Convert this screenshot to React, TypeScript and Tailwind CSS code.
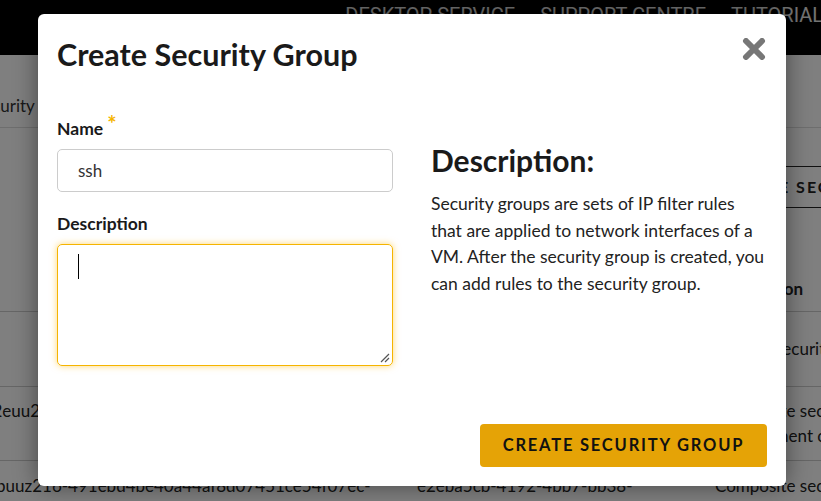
import React from "react";

export default function App() {
  return (
    <div className="relative w-[821px] h-[501px] overflow-hidden bg-white font-['Lato',sans-serif] text-[#222]">
      {/* Underlying page */}
      <header className="h-[55px] bg-black flex justify-end items-start gap-[25px] pt-[3px] font-['Roboto',sans-serif] text-[20px] leading-[24px] text-white/90 uppercase whitespace-nowrap">
        <span className="ml-auto">Desktop Service</span>
        <span>Support Centre</span>
        <span className="mr-[-14px]">Tutorials</span>
      </header>
      <div className="h-[73px] border-b border-[#ddd] flex items-end pb-[9px]">
        <span className="ml-[-26px] text-[17px] text-[#333] whitespace-nowrap">Security Groups</span>
      </div>
      <div className="flex justify-end pt-[38px]">
        <div className="h-[42px] mr-[-163px] px-[24px] border border-[#222] flex items-center text-[16px] font-bold tracking-[2px] text-[#222] whitespace-nowrap">
          CREATE SECURITY GROUP
        </div>
      </div>
      <div className="mt-[56px] h-[48px] border-b border-[#ccc] flex items-center">
        <div className="w-[715px] shrink-0" />
        <span className="font-bold text-[17px] pt-[2px]">Description</span>
      </div>
      <div className="h-[75px] border-b border-[#ccc] flex items-center text-[17px]">
        <div className="w-[715px] shrink-0" />
        <span className="whitespace-nowrap">Default security group</span>
      </div>
      <div className="h-[74px] border-b border-[#ccc] flex items-start pt-[11px] text-[17px] leading-[25px]">
        <div className="w-[417px] shrink-0 overflow-hidden whitespace-nowrap">
          <span className="ml-[-30px]">sg-2euu2</span>
        </div>
        <div className="w-[298px] shrink-0" />
        <span className="whitespace-nowrap">Composite security group for<br />Management console</span>
      </div>
      <div className="flex items-start pt-[12px] text-[17px] leading-[25px] whitespace-nowrap">
        <div className="w-[417px] shrink-0 overflow-hidden">
          <span className="ml-[-4px]">buuz216-491ebd4be40a44af8d07451ce54f07ec-</span>
        </div>
        <div className="w-[298px] shrink-0">e2eba5cb-4192-4bb7-bb38-</div>
        <span>Composite security</span>
      </div>

      {/* Overlay */}
      <div className="absolute inset-0 bg-black/50" />

      {/* Modal */}
      <div className="absolute left-[38px] top-[14px] w-[748px] h-[472px] bg-white rounded-[6px] shadow-[0_0_24px_rgba(0,0,0,0.45)] flex flex-col">
        <div className="flex items-start justify-between pt-[22px] pl-[19px] pr-[20px]">
          <h1 className="text-[30.5px] leading-[36px] font-bold text-[#1a1a1a]">Create Security Group</h1>
          <svg width="24" height="22" viewBox="0 0 24 22" className="mt-[2px]">
            <path d="M4 3 L20 19 M20 3 L4 19" stroke="#777" strokeWidth="6" strokeLinecap="round" />
          </svg>
        </div>
        <div className="flex mt-[47px]">
          <div className="ml-[19px] w-[336px] flex flex-col">
            <label className="text-[17.5px] leading-[20px] font-bold text-[#1a1a1a] flex">
              Name<span className="text-[#f5b400] text-[22px] leading-[14px] ml-[4px] mt-[-2px]">*</span>
            </label>
            <div className="mt-[10px] h-[43px] border border-[#ccc] rounded-[5px] flex items-center pl-[20px] text-[17px] text-[#333]">
              ssh
            </div>
            <label className="mt-[22px] text-[17.5px] leading-[20px] font-bold text-[#1a1a1a]">Description</label>
            <div className="relative mt-[10px] h-[122px] border border-[#f5b400] rounded-[5px] shadow-[0_0_7px_rgba(255,183,0,0.55)]">
              <div className="absolute left-[20px] top-[9px] w-[1px] h-[25px] bg-black" />
              <svg className="absolute right-[2px] bottom-[2px]" width="10" height="10" viewBox="0 0 10 10">
                <path d="M9 1 L1 9 M9 5 L5 9" stroke="#555" strokeWidth="1.2" />
              </svg>
            </div>
          </div>
          <div className="ml-[38px] w-[336px] flex flex-col">
            <h2 className="mt-[24px] text-[30px] leading-[34px] font-bold text-[#1a1a1a]">Description:</h2>
            <p className="mt-[14px] text-[17.5px] leading-[26.7px] text-[#222]">
              Security groups are sets of IP filter rules that are applied to network interfaces of a VM. After the security group is created, you can add rules to the security group.
            </p>
          </div>
        </div>
        <div className="mt-auto flex justify-end pr-[19px] pb-[19px]">
          <button className="h-[43px] w-[287px] bg-[#e5a306] rounded-[4px] text-[16.5px] font-bold tracking-[1.8px] text-[#111]">
            CREATE SECURITY GROUP
          </button>
        </div>
      </div>
    </div>
  );
}
